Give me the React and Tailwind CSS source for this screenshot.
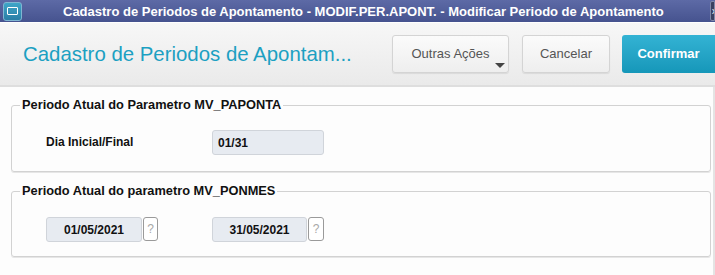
export default function App() {
  return (
    <div className="w-[715px] h-[275px] overflow-hidden flex flex-col bg-[#f7f7f7] font-['Liberation_Sans',Arial,sans-serif]">
      {/* barra de titulo */}
      <div className="h-[22px] shrink-0 flex items-center bg-gradient-to-b from-[#5d6aa6] to-[#46538f] relative">
        <div className="ml-[3px] w-[19px] h-[19px] rounded-[3px] bg-gradient-to-b from-[#3fa6c8] to-[#2a7ea6] border border-[#7fb6d2] flex items-center justify-center">
          <div className="w-[11px] h-[8px] border-[1.5px] border-white rounded-[1px]" />
        </div>
        <div className="ml-[41px] text-white font-bold text-[13px] whitespace-nowrap leading-none">
          Cadastro de Periodos de Apontamento - MODIF.PER.APONT. - Modificar Periodo de Apontamento
        </div>
        <div className="absolute right-0 top-[1px] w-[5px] h-[20px] rounded-l-[2px] bg-[#3b4160] border border-[#8088a8] text-white text-[9px] leading-[18px] overflow-hidden pl-[1px]">x</div>
      </div>

      {/* cabecalho */}
      <div className="h-[65px] shrink-0 flex items-center bg-gradient-to-b from-[#f7f7f7] to-[#eaeaea] border-b-2 border-[#dedede] border-t border-t-white">
        <h1 className="ml-[23px] text-[20.4px] text-[#1ca0c2] whitespace-nowrap flex-1">Cadastro de Periodos de Apontam...</h1>
        <button className="relative w-[117px] h-[38px] rounded-[3px] border border-[#d4d4d4] bg-gradient-to-b from-[#fbfbfb] to-[#eeeeee] text-[13px] text-[#555] shadow-[0_1px_1px_rgba(0,0,0,0.08)]">
          Outras Ações
          <span className="absolute right-[3px] bottom-[4px] w-0 h-0 border-l-[5px] border-r-[5px] border-t-[5px] border-l-transparent border-r-transparent border-t-[#444]" />
        </button>
        <button className="ml-[13px] w-[88px] h-[38px] rounded-[3px] border border-[#d4d4d4] bg-gradient-to-b from-[#fbfbfb] to-[#eeeeee] text-[13px] text-[#555] shadow-[0_1px_1px_rgba(0,0,0,0.08)]">
          Cancelar
        </button>
        <button className="ml-[12px] w-[93px] h-[38px] rounded-l-[3px] bg-gradient-to-b from-[#33b3d4] to-[#1597b9] text-[13px] font-bold text-white">
          Confirmar
        </button>
      </div>

      {/* corpo */}
      <div className="flex-1 bg-[#fdfdfd] border-r-2 border-[#e4e4e4] pl-[11px] pr-[2px]">
        <fieldset className="mt-[10px] h-[75px] border border-[#d2d2d2] rounded-[3px] shadow-[0_1px_0_#e6e6e6]">
          <legend className="ml-[8px] px-[2px] text-[12.8px] font-bold text-[#111] leading-[16px]">
            Periodo Atual do Parametro MV_PAPONTA
          </legend>
          <div className="flex items-start mt-[17px] pl-[34px]">
            <div className="w-[166px] pt-[3px] text-[12px] font-bold text-[#111]">Dia Inicial/Final</div>
            <div className="w-[112px] h-[25px] rounded-[3px] border border-[#d0d4da] bg-[#e7ebf1] text-[12px] font-bold text-[#111] flex items-center pl-[5px]">
              01/31
            </div>
          </div>
        </fieldset>

        <fieldset className="mt-[11px] h-[74px] border border-[#d2d2d2] rounded-[3px] shadow-[0_1px_0_#e6e6e6]">
          <legend className="ml-[8px] px-[2px] text-[12.8px] font-bold text-[#111] leading-[16px]">
            Periodo Atual do parametro MV_PONMES
          </legend>
          <div className="flex items-start mt-[18px] pl-[34px]">
            <div className="w-[166px] flex gap-[1px]">
              <div className="w-[96px] h-[25px] rounded-[3px] border border-[#d0d4da] bg-[#e7ebf1] text-[12px] font-bold text-[#111] flex items-center justify-center">
                01/05/2021
              </div>
              <div className="w-[15px] h-[24px] rounded-[3px] border border-[#9a9a9a] bg-white text-[12px] text-[#a8a8a8] flex items-center justify-center">?</div>
            </div>
            <div className="flex gap-[1px]">
              <div className="w-[95px] h-[25px] rounded-[3px] border border-[#d0d4da] bg-[#e7ebf1] text-[12px] font-bold text-[#111] flex items-center justify-center">
                31/05/2021
              </div>
              <div className="w-[16px] h-[24px] rounded-[3px] border border-[#9a9a9a] bg-white text-[12px] text-[#a8a8a8] flex items-center justify-center">?</div>
            </div>
          </div>
        </fieldset>
      </div>
    </div>
  );
}
